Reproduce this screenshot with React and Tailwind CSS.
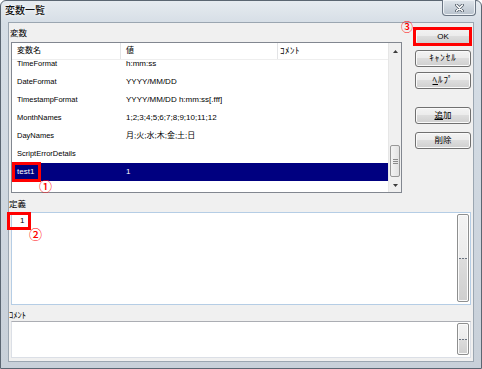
const rows = [
  ["TimeFormat", "h:mm:ss"],
  ["DateFormat", "YYYY/MM/DD"],
  ["TimestampFormat", "YYYY/MM/DD h:mm:ss[.fff]"],
  ["MonthNames", "1;2;3;4;5;6;7;8;9;10;11;12"],
  ["DayNames", "月;火;水;木;金;土;日"],
  ["ScriptErrorDetails", ""],
];

const btnBg =
  "bg-[linear-gradient(#f3f3f3_0%,#ebebeb_50%,#dddddd_50%,#cfcfcf_100%)]";

function Btn({ children, className = "" }) {
  return (
    <div
      className={`w-[56px] h-[17px] shrink-0 rounded-[3px] border border-[#707070] ${btnBg} shadow-[inset_0_0_0_1px_#fafafa] flex items-center justify-center text-[8.5px] leading-none text-black ${className}`}
    >
      {children}
    </div>
  );
}

function Dots() {
  return (
    <div className="flex gap-[1px]">
      <span className="w-[2px] h-[1px] bg-[#6a7380]" />
      <span className="w-[2px] h-[1px] bg-[#6a7380]" />
      <span className="w-[2px] h-[1px] bg-[#6a7380]" />
    </div>
  );
}

function EllipsisBtn({ className = "" }) {
  return (
    <div
      className={`w-[12px] shrink-0 rounded-[2px] border border-[#8e8f8f] ${btnBg} shadow-[inset_0_0_0_1px_#fbfbfb] flex items-center justify-center ${className}`}
    >
      <Dots />
    </div>
  );
}

function Arrow({ up }) {
  return (
    <svg width="5" height="3" viewBox="0 0 5 3">
      <path d={up ? "M0 3L2.5 0L5 3Z" : "M0 0L2.5 3L5 0Z"} fill="#3c3c3c" />
    </svg>
  );
}

export default function App() {
  return (
    <div className="relative w-[482px] h-[369px] overflow-hidden font-[Liberation_Sans,Noto_Sans_CJK_JP,sans-serif] text-black">
      <div className="w-[482px] h-[369px] flex flex-col border border-[#5b6672] rounded-t-[6px] bg-[linear-gradient(180deg,#e6ebf0_0px,#d6dee6_22px,#c8d0d9_100%)]">
        {/* title bar */}
        <div className="h-[21px] shrink-0 flex items-start justify-between pl-[4px] pr-[5px]">
          <span className="mt-[4px] text-[10px] leading-[12px] font-medium text-[#111] [text-shadow:0_0_5px_#fff,0_0_3px_#fff]">
            変数一覧
          </span>
          <div className="-mt-[1px] w-[34px] h-[16px] rounded-b-[4px] border border-t-0 border-[#6a7583] bg-[linear-gradient(#dfe5eb,#b7c1cc)] shadow-[inset_0_0_0_1px_#eef2f6] flex items-center justify-center">
            <svg width="9" height="8" viewBox="0 0 9 8">
              <path d="M1.5 1L7.5 7M7.5 1L1.5 7" stroke="#4a5562" strokeWidth="3" strokeLinecap="round" />
              <path d="M1.5 1L7.5 7M7.5 1L1.5 7" stroke="#fff" strokeWidth="1.6" strokeLinecap="round" />
            </svg>
          </div>
        </div>

        {/* client area */}
        <div className="ml-[7px] w-[466px] h-[340px] border border-[#9ba6b1] bg-[#f0f0f0] flex flex-col pl-[2px]">
          <div className="flex">
            <div className="flex flex-col">
              <div className="mt-[4px] -ml-[1px] h-[12px] leading-[12px] text-[8.5px]">変数</div>
              <div className="mt-[3px] w-[391px] h-[151px] border border-[#828790] bg-white flex overflow-hidden">
                <div className="flex-1 flex flex-col overflow-hidden">
                  <div className="relative z-10 h-[17px] shrink-0 bg-white border-b border-[#eeeeee] flex text-[8px] leading-none">
                    <div className="w-[109px] pl-[5px] border-r border-[#e3e4e6] flex items-center">変数名</div>
                    <div className="w-[157px] pl-[5px] border-r border-[#e3e4e6] flex items-center">値</div>
                    <div className="flex-1 pl-[2px] flex items-center text-[9px] tracking-[0.5px]">ｺﾒﾝﾄ</div>
                  </div>
                  <div className="-mt-[5px] flex flex-col">
                    {rows.map(([name, value]) => (
                      <div key={name} className="h-[18px] flex items-center text-[7.5px] leading-none">
                        <div className="w-[109px] pl-[5px]">{name}</div>
                        <div className="pl-[5px] text-[8px]">{value}</div>
                      </div>
                    ))}
                    <div className="h-[18px] flex items-center bg-[#000080] text-white text-[8px] leading-none">
                      <div className="w-[109px] pl-[5px]">test1</div>
                      <div className="pl-[5px]">1</div>
                    </div>
                  </div>
                </div>
                {/* scrollbar */}
                <div className="w-[13px] shrink-0 flex flex-col bg-[#f0f0f0] border-l border-[#e6e6e6]">
                  <div className="h-[16px] flex items-center justify-center">
                    <Arrow up />
                  </div>
                  <div className="flex-1">
                    <div className="mt-[86px] mx-[1px] h-[32px] rounded-[2px] border border-[#979797] bg-[linear-gradient(90deg,#f3f3f3,#e2e2e2)] flex flex-col items-center justify-center gap-[1px]">
                      <span className="w-[5px] h-[1px] bg-[#8a8a8a]" />
                      <span className="w-[5px] h-[1px] bg-[#8a8a8a]" />
                      <span className="w-[5px] h-[1px] bg-[#8a8a8a]" />
                    </div>
                  </div>
                  <div className="h-[14px] flex items-center justify-center">
                    <Arrow />
                  </div>
                </div>
              </div>
            </div>

            <div className="ml-[13px] pt-[5px] flex flex-col">
              <Btn className="border-[#3c7fb1] bg-[linear-gradient(#eaf3fa_0%,#dde9f2_50%,#cbdbe8_50%,#bdd1e1_100%)] text-[8px]">OK</Btn>
              <Btn className="mt-[5px] text-[9px] tracking-[1px]">ｷｬﾝｾﾙ</Btn>
              <Btn className="mt-[5px] text-[9px] tracking-[1px]">
                <span className="underline">ﾍ</span>ﾙﾌﾟ
              </Btn>
              <Btn className="mt-[18px]">
                <span className="underline">追</span>加
              </Btn>
              <Btn className="mt-[8px]">削除</Btn>
            </div>
          </div>

          <div className="mt-[5px] -ml-[2px] h-[12px] leading-[12px] text-[8.5px]">定義</div>
          <div className="mt-[2px] w-[460px] h-[93px] border border-[#b5cde5] bg-white flex">
            <div className="flex-1 pl-[8px] pt-[3px] text-[8px] leading-[10px]">1</div>
            <EllipsisBtn className="mt-[1px] mb-[2px] mr-[1px]" />
          </div>

          <div className="mt-[4px] -ml-[2px] h-[12px] leading-[12px] text-[8.5px]">ｺﾒﾝﾄ</div>
          <div className="w-[460px] h-[37px] border border-[#dbdfe6] border-t-[#abadb3] bg-white flex">
            <div className="flex-1" />
            <EllipsisBtn className="mt-[1px] mb-[2px] mr-[1px]" />
          </div>
        </div>
      </div>

      {/* annotations */}
      <div className="absolute left-[413px] top-[27px] w-[59px] h-[19px] border-[3px] border-[#ff0000]" />
      <span className="absolute left-[401px] top-[21px] text-[12px] leading-none font-medium text-[#ff0000] font-[Noto_Sans_CJK_JP,sans-serif]">③</span>
      <div className="absolute left-[12px] top-[162px] w-[29px] h-[20px] border-[3px] border-[#ff0000]" />
      <span className="absolute left-[39px] top-[179px] text-[13px] leading-none font-medium text-[#ff0000] font-[Noto_Sans_CJK_JP,sans-serif]">①</span>
      <div className="absolute left-[7px] top-[212px] w-[24px] h-[18px] border-[3px] border-[#ff0000]" />
      <span className="absolute left-[29px] top-[227px] text-[13px] leading-none font-medium text-[#ff0000] font-[Noto_Sans_CJK_JP,sans-serif]">②</span>
    </div>
  );
}
